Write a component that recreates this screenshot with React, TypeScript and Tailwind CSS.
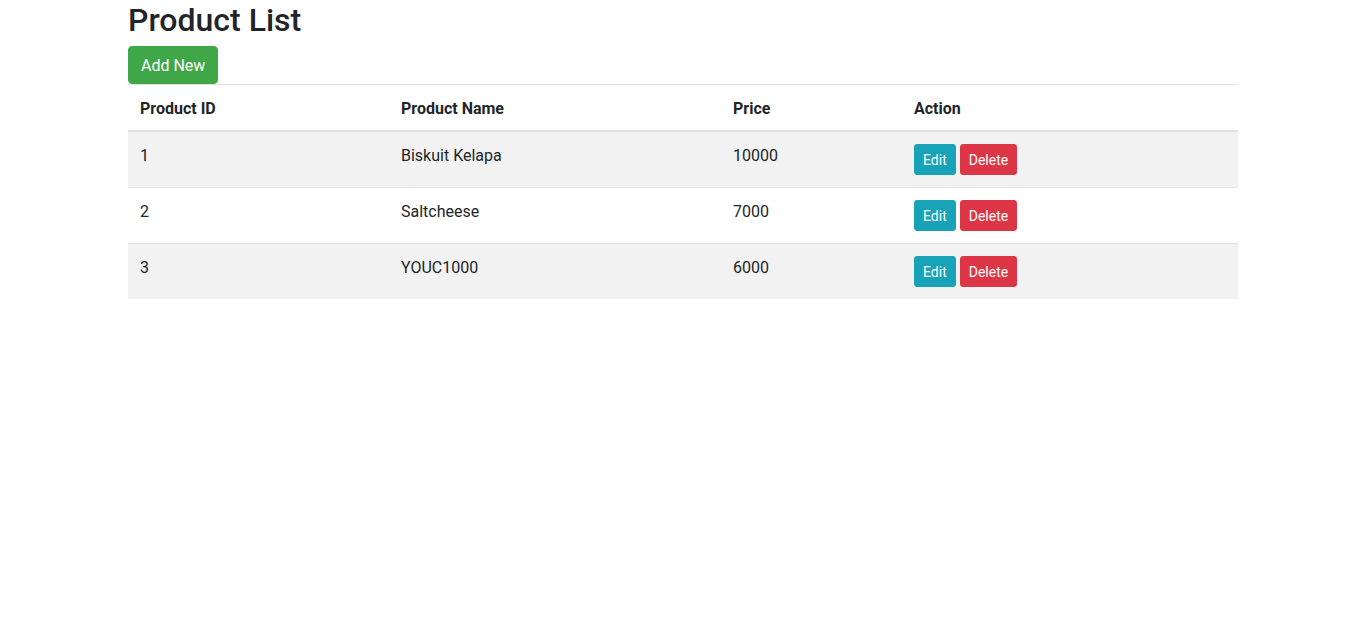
import React from "react";

const rows = [
  { id: "1", name: "Biskuit Kelapa", price: "10000" },
  { id: "2", name: "Saltcheese", price: "7000" },
  { id: "3", name: "YOUC1000", price: "6000" },
];

const cols = "grid grid-cols-[261px_332px_181px_336px]";

export default function App() {
  return (
    <div className="min-h-[637px] bg-white text-[#212529]" style={{ fontFamily: "Roboto, 'Liberation Sans', sans-serif" }}>
      <div className="mx-auto w-[1110px]">
        <h2 className="m-0 h-[38px] pt-[1px] text-[32px] font-medium leading-[38px]">Product List</h2>
        <div className="mt-2 flex">
          <button className="h-[38px] rounded-[4px] border border-[#3fa748] bg-[#3fa748] px-3 pt-[1px] text-[16px] leading-6 text-white">Add New</button>
        </div>
        <div className="border-t border-[#dee2e6]">
          <div className={`${cols} h-[47px] border-b-2 border-[#dee2e6] text-[16px] font-bold leading-6`}>
            <div className="px-3 pt-3">Product ID</div>
            <div className="px-3 pt-3">Product Name</div>
            <div className="px-3 pt-3">Price</div>
            <div className="px-3 pt-3">Action</div>
          </div>
          {rows.map((r, i) => (
            <div
              key={r.id}
              className={`${cols} h-[55px] text-[16px] leading-6 ${i > 0 ? "border-t border-[#dee2e6] box-content" : ""} ${i % 2 === 0 ? "bg-[#f2f2f2]" : "bg-white"}`}
            >
              <div className="px-3 pt-3">{r.id}</div>
              <div className="px-3 pt-3">{r.name}</div>
              <div className="px-3 pt-3">{r.price}</div>
              <div className="flex gap-1 px-3 pt-3">
                <button className="h-[31px] rounded-[3px] border border-[#17a2b8] bg-[#17a2b8] px-2 pt-[1px] text-[14px] leading-[21px] text-white">Edit</button>
                <button className="h-[31px] rounded-[3px] border border-[#dc3545] bg-[#dc3545] px-2 pt-[1px] text-[14px] leading-[21px] text-white">Delete</button>
              </div>
            </div>
          ))}
        </div>
      </div>
    </div>
  );
}
